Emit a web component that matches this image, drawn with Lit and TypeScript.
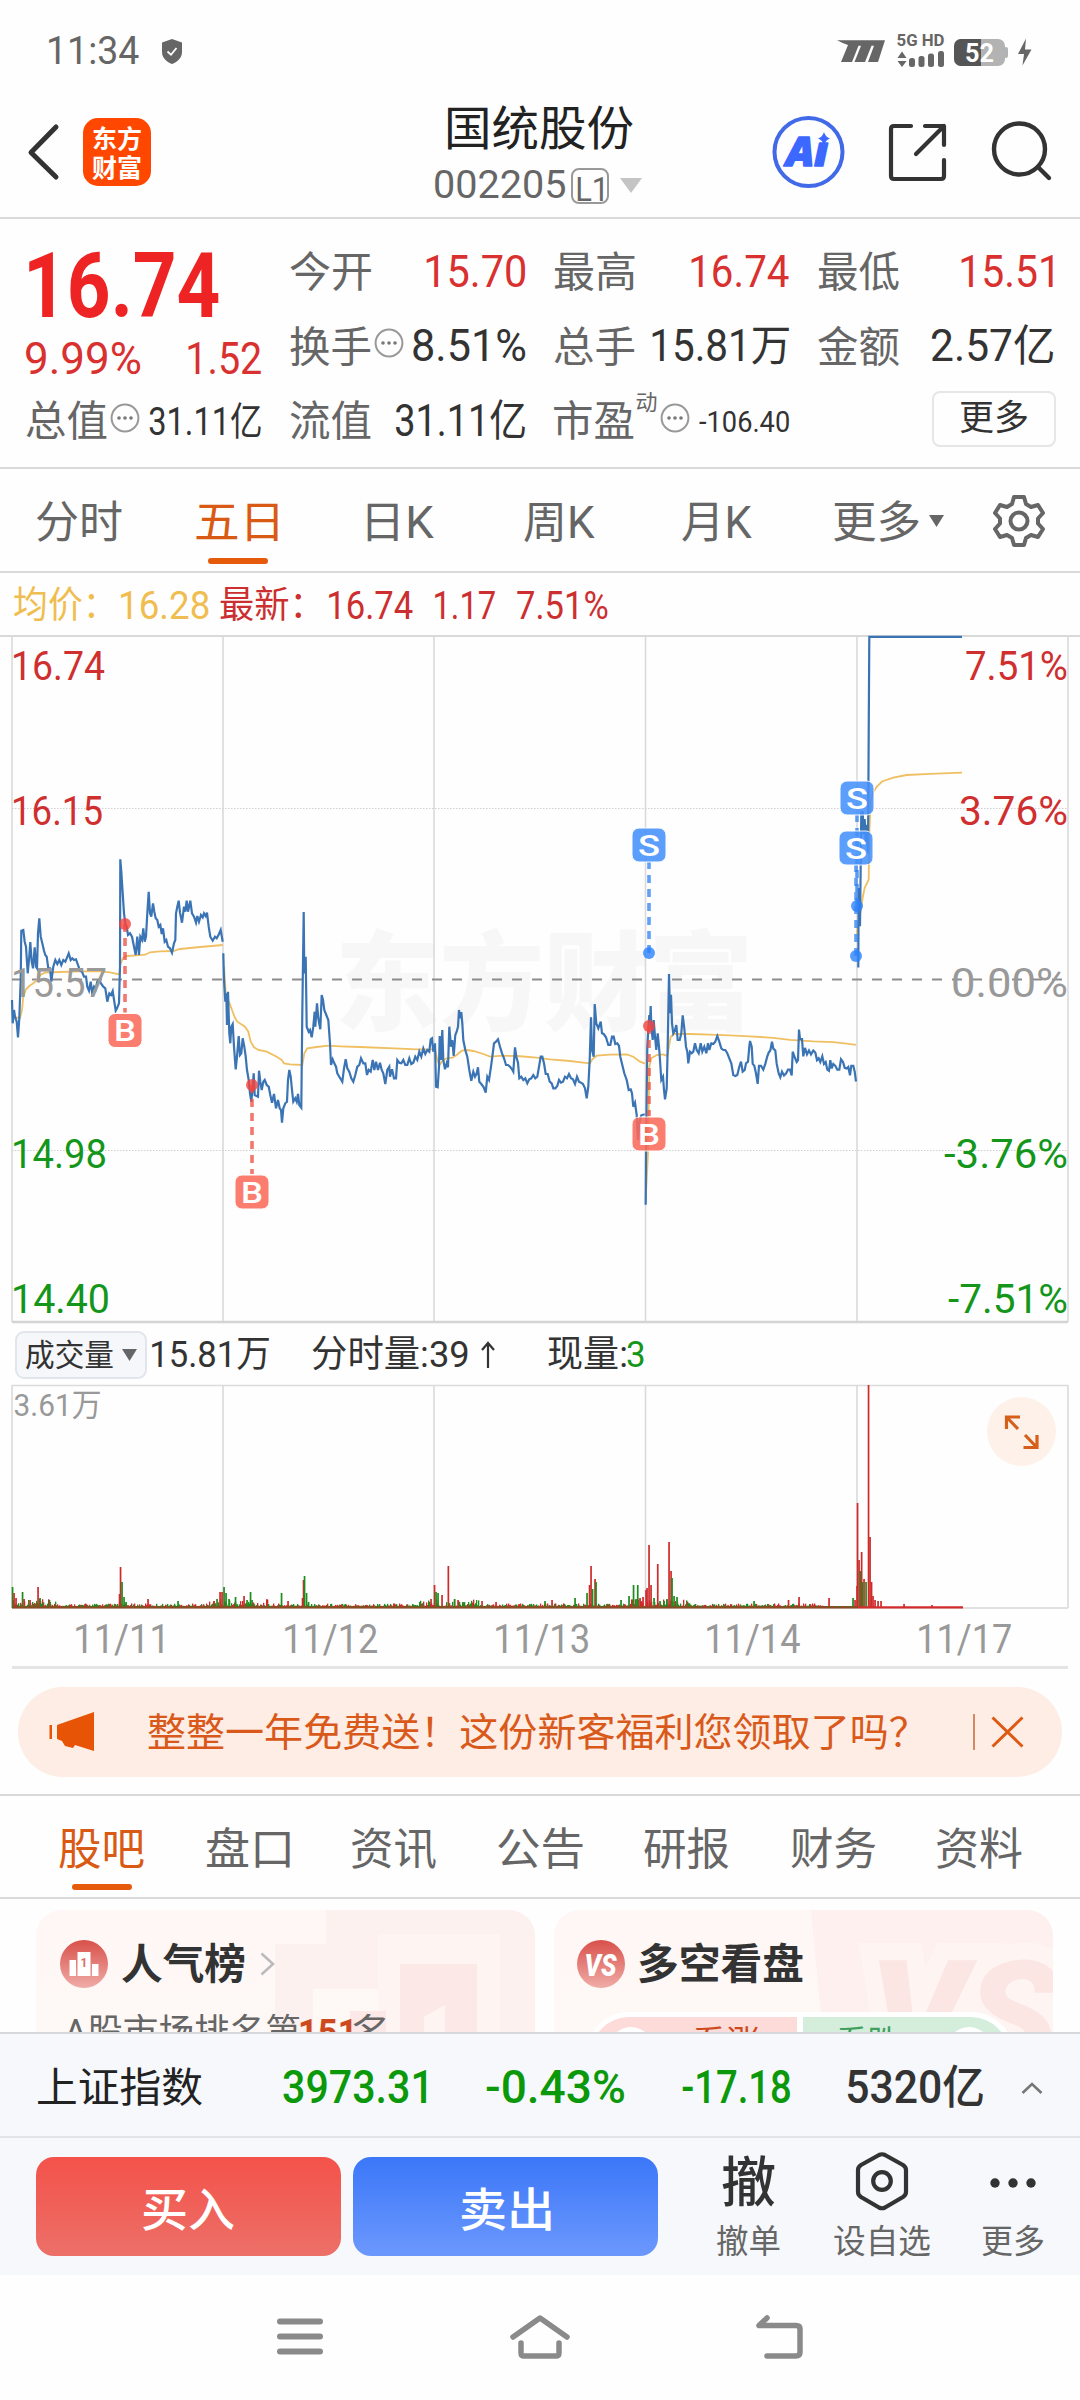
import { LitElement, html, css, svg } from "lit";
import { customElement, property } from "lit/decorators.js";
import { styleMap } from "lit/directives/style-map.js";
import { classMap } from "lit/directives/class-map.js";

const pen = document.createElement("canvas").getContext("2d")!;

/** A single line of text whose ink fills exactly `w` pixels. */
@customElement("fit-text")
class FitText extends LitElement {
  @property() text = "";
  @property({ type: Number }) w = 0;

  static styles = css`
    :host { display: block; flex: none; line-height: 1.2; white-space: pre; }
    .box { display: block; }
    .ink { display: inline-block; transform-origin: 0 50%; }
  `;

  render() {
    const cs = getComputedStyle(this);
    pen.font = `${cs.fontStyle} ${cs.fontWeight} ${cs.fontSize} ${cs.fontFamily}`;
    const m = pen.measureText(this.text);
    const k = this.w / (m.actualBoundingBoxLeft + m.actualBoundingBoxRight);
    return html`<span class="box" style=${styleMap({ width: `${this.w}px` })}
      ><span class="ink" style=${styleMap({ transform: `translateX(${m.actualBoundingBoxLeft * k}px) scaleX(${k})` })}>${this.text}</span></span>`;
  }
}

const fit = (text: string, w: number, cls = "") => html`<fit-text class=${cls} .text=${text} .w=${w}></fit-text>`;

const map = (pts: string, ox: number, oy: number, kx = 1 / 3, ky = 1 / 3) =>
  pts.trim().split(/\s+/).map((p) => {
    const [x, y] = p.split(",").map(Number);
    return `${(ox + x * kx).toFixed(1)},${(oy + y * ky).toFixed(1)}`;
  }).join(" ");
const left = (p: string) => map(p, 0, 145);
const mid = (p: string) => map(p, 390, 245);
const right = (p: string) => map(p, 640, -15, 1 / 3, 1 / 2.613);

const PRICE = [
  left("36,660 38,730 42,690 45,710 50,725 54,772 58,715 62,600 64,452 70,450 74,485 78,500 83,580 87,540 91,486 95,545 99,565 104,502 108,560 111,565 114,460 118,415 122,470 127,490 132,512 136,525 140,530 145,565 150,565 154,605 160,560 166,540 172,552 178,540 184,555 190,540 196,545 200,535 206,520 212,540 217,535 222,540 228,538 234,555 240,572 246,575 252,590 258,590 262,620 267,632 272,605 276,635 282,620 287,628 292,605 298,600 304,612 310,620 316,625 322,665 328,640 333,645 338,633 343,665 347,692 351,685 357,670 360,560 361,238 364,275 368,340 372,400 376,430 380,440 384,465 390,460 396,470 400,490 407,525 412,470 417,525 421,470 426,480 430,445 434,485 438,470 442,400 446,335 450,400 454,410 459,370 463,395 467,415 472,420 476,440 481,435 485,462 489,445 494,485 499,480 504,500 510,505 516,518 522,490 526,480 528,400 532,380 536,362 540,398 546,428 552,380 556,395 560,362 564,395 571,362 576,400 582,410 588,428 592,408 597,425 603,405 608,412 612,400 617,408 621,398 626,440 631,470 638,482 645,470 650,475 657,462 662,450 668,485"),
  left("670,520 672,600 676,665 679,640 681,735 684,635 688,760 691,790 694,740 698,732 702,800 707,868 711,830 716,768 720,825 724,820 728,775 733,800 737,830 741,870 746,900 750,940 754,965 758,920 761,880 764,945 770,948 774,950 777,872 781,905 785,930 790,905 794,900 800,915 806,920 811,945 816,968 822,942 828,985 834,960 839,985 843,990 846,1028 850,985 856,970 861,965 864,900 868,870 872,890 876,930 880,965 886,955 890,965 894,942 898,975 904,983 907,700 911,396 913,580 917,530 920,740 926,755 930,750 935,772 940,740 944,695 946,740 951,670 955,715 961,748 965,645 969,660 973,690 979,705 985,720 990,790 993,855 998,838 1003,850 1008,860 1012,880 1018,890 1027,905 1032,865 1037,838 1042,865 1048,875 1054,895 1060,905 1066,885 1072,860 1078,855 1083,835 1090,850 1096,850 1101,885 1106,870 1112,875 1118,840 1123,870 1128,845 1134,870 1140,848 1145,870 1150,880 1156,912 1162,870 1168,860") + " " +
    mid("0,590 6,568 12,595 18,595 22,540 28,548 34,550 40,540 46,555 52,555 58,535 64,552 70,548 76,530 82,540 88,515 94,530 100,505 106,522 112,510 118,515 122,478 126,475 130,515 134,495"),
  mid("135,490 138,620 143,622 147,560 149,468 153,540 157,450 160,540 165,568 170,550 174,562 178,440 183,500 187,480 191,528 196,465 200,455 204,440 207,390 210,415 214,396 217,430 220,480 226,510 232,530 238,570 244,602 250,575 255,590 260,580 264,562 268,605 274,612 281,622 287,638 292,590 297,600 303,560 309,515 312,490 318,485 324,478 330,500 336,520 342,535 348,555 354,555 360,560 366,568 370,575 375,502 379,530 384,548 388,595 394,590 400,600 406,595 412,610 418,598 424,595 430,585 436,595 442,590 448,555 452,530 457,530 462,550 467,582 473,582 479,605 485,610 490,625 496,625 502,618 507,600 513,608 519,605 525,590 531,595 537,582 543,595 549,598 555,612 561,590 567,605 573,608 579,612 585,625 590,655 595,620 599,540 603,412 606,510 611,530 614,372 619,430 625,445 632,425 636,460 641,462 648,472 655,495 661,495 666,470 671,470 676,492 682,490 687,498 691,530 697,555 703,580 710,600 716,630 722,628 726,640 730,680 735,668 740,705 744,780 748,730 754,706 764,703"),
  mid("767,974 768,820 770,640 772,500 776,430 778,405 780,425 782,378 784,440 788,480 791,420 795,470 799,510 803,460 807,500 810,540 814,600 819,590 822,630 825,658 830,625 833,500 837,282 840,400 843,344 846,430 850,460 855,450 859,435 863,480 869,480 874,460 878,406 883,445 888,500 892,515 895,550 900,515 905,520 910,515 915,490 920,510 926,520 932,490 937,515 943,500 949,520 954,490 958,510 964,490 970,492 976,485 982,468 988,485 994,505 1000,510 1006,510 1012,520 1018,535 1024,550 1030,585 1036,588 1042,585 1048,560 1053,545 1058,575 1064,570 1068,550 1074,545 1078,500") + " " +
    right("330,1100 335,1115 338,1160 343,1165 348,1185 353,1212 357,1165 363,1165 370,1175 376,1160 382,1140 386,1130 391,1125 396,1102 400,1120 406,1125 410,1160 416,1185 421,1195 426,1180 432,1190 438,1185 444,1175 450,1175 455,1190 458,1128 463,1140 470,1155 474,1150 477,1070 480,1095 486,1095 490,1140 495,1118 501,1135 507,1125 513,1135 520,1125 526,1130 531,1150 536,1145 541,1155 547,1140 552,1160 557,1155 562,1175 567,1178 571,1150 575,1172 580,1160 586,1165 592,1175 598,1175 603,1148 609,1155 614,1170 620,1172 625,1168 630,1190 634,1165 640,1165 644,1180 648,1206"),
  right("655,908 656,700 658,760 660,800 662,640 664,500 666,560 668,500 671,560 674,520 677,580 680,535 684,610 686,300 688,44 966,44"),
];

const AVERAGE = [
  left("45,712 60,714 66,690 70,650 78,628 88,618 100,610 112,600 122,584 135,578 180,576 240,574 300,574 330,577 358,583 361,555 368,535 380,528 410,526 436,524 450,517 480,514 520,513 540,507 570,504 600,501 635,498 668,495"),
  left("672,560 678,650 688,668 696,690 704,712 712,725 735,740 745,755 752,785 762,802 775,810 800,815 830,830 845,840 852,850 870,853 907,855 913,820 922,805 950,801 985,797 1020,799 1080,801 1200,806") + " " + mid("80,508 134,508"),
  mid("136,510 142,540 148,556 158,542 170,535 188,533 200,525 215,512 232,510 250,513 280,522 300,530 340,527 380,528 440,533 480,538 540,543 580,548 600,550 607,538 620,527 660,524 710,523 730,530 750,545 765,551"),
  mid("767,960 774,820 778,560 784,535 800,525 820,523 832,528 837,500 842,470 852,462 900,462 960,464 1020,466 1080,469") + " " + right("400,1092 450,1097 520,1101 580,1103 620,1107 648,1110"),
  right("650,820 655,790 662,760 668,725 674,700 686,678 688,560 692,470 700,450 710,436 726,422 760,412 800,405 870,402 966,399"),
];

interface Trade { kind: "B" | "S"; x: number; y: number; dot: number; }
const TRADES: Trade[] = [
  { kind: "B", x: 125, y: 395.5, dot: 289 },
  { kind: "B", x: 252, y: 557, dot: 450 },
  { kind: "S", x: 649, y: 210, dot: 318 },
  { kind: "B", x: 649, y: 499, dot: 391 },
  { kind: "S", x: 857, y: 163, dot: 271 },
  { kind: "S", x: 856, y: 213, dot: 321 },
];

// x, height, colour of the notable volume bars
const SPIKES: [number, number, "r" | "g"][] = [
  [12.5, 21, "g"], [14, 15, "r"], [16, 10, "r"], [22.5, 16, "g"], [24, 9, "r"], [30, 8, "r"], [38, 21, "r"], [40, 10, "g"], [50, 6, "g"],
  [119.5, 14, "r"], [120.5, 41, "r"], [122, 26, "g"], [124, 11, "g"], [126, 6, "g"], [148, 9, "r"], [178, 7, "g"], [214, 7, "r"], [217, 9, "g"],
  [220, 16, "r"], [222, 16, "r"], [224, 21, "g"], [226, 15, "g"], [229, 9, "g"], [235.5, 11, "g"], [244, 12, "r"], [247, 8, "g"], [250.5, 16, "g"], [252, 8, "g"], [281.5, 15, "g"], [288, 7, "r"],
  [302.5, 10, "r"], [303.5, 28, "r"], [304.5, 32, "g"], [306.5, 15, "g"], [308.5, 6, "g"],
  [431, 9, "r"], [434.5, 23, "r"], [436, 16, "g"], [438, 15, "g"], [442, 13, "r"], [448.3, 42, "r"], [454.5, 9, "g"], [458, 8, "r"], [463, 6, "g"], [482, 7, "r"], [496, 6, "r"], [545, 7, "g"], [552, 8, "r"],
  [575, 10, "g"], [587, 15, "g"], [589.5, 23, "r"], [591, 42, "r"], [592.5, 19, "g"], [595, 29, "r"], [596, 26, "g"],
  [621, 8, "g"], [629, 12, "g"], [633.5, 23, "g"], [636, 9, "g"], [637.7, 23, "g"], [640, 10, "r"], [643, 11, "r"], [646, 18, "r"], [647, 20, "r"], [649, 63, "r"], [651, 23, "r"], [654, 10, "g"],
  [657.7, 44, "r"], [660, 7, "g"], [664, 7, "g"], [667, 9, "g"], [669, 66, "r"], [671, 37, "r"], [672, 30, "g"], [674, 12, "g"], [677, 11, "g"],
  [754, 7, "g"], [788.5, 8, "r"], [799, 11, "r"], [829, 10, "r"], [853, 10, "g"], [855, 8, "r"], [857, 22, "r"], [857.5, 105, "r"], [859, 48, "r"], [860.2, 37, "g"], [861.6, 56, "r"], [862.6, 26, "g"],
  [864, 29, "r"], [866, 26, "g"], [868.5, 223, "r"], [870, 71, "r"], [871.5, 26, "r"], [873, 12, "r"], [875, 8, "r"], [878, 7, "r"], [881, 7, "r"], [904, 4, "r"], [932, 3, "r"],
];

const GRID_X = [12, 223, 434, 645.5, 857, 1068];
const RED = "#cf2f2f", GREEN = "#14961a", GREY = "#999";
const SCALE: [string, number, number, number, string][] = [
  ["16.74", 11, 94, 30, RED], ["16.15", 11, 92, 175, RED], ["15.57", 11, 96, 347, GREY], ["14.98", 11, 96, 518, GREEN], ["14.40", 11, 99, 663, GREEN],
];
const PERCENT: [string, number, number, string][] = [
  ["7.51%", 103, 30, RED], ["3.76%", 109, 175, RED], ["0.00%", 117, 347, GREY], ["-3.76%", 124, 518, GREEN], ["-7.51%", 120, 663, GREEN],
];

const info = html`<svg class="info" width="30" height="30" viewBox="0 0 30 30"><circle cx="15" cy="15" r="13.4" fill="none" stroke="#999" stroke-width="2"/><g fill="#777"><circle cx="9" cy="15" r="1.8"/><circle cx="15" cy="15" r="1.8"/><circle cx="21" cy="15" r="1.8"/></g></svg>`;

@customElement("app-root")
class AppRoot extends LitElement {
  static styles = css`
    :host { display: block; width: 1080px; height: 2400px; overflow: hidden; background: #fefefe; color: #333;
      font-family: Roboto, "Noto Sans CJK SC", sans-serif; }
    * { box-sizing: border-box; }
    svg { display: block; flex: none; overflow: visible; }
    .status { display: flex; align-items: center; height: 101px; padding: 1px 49px 0; color: #666; }
    .clock { font-size: 38px; margin-right: 22px; padding-top: 1px; }
    .signal { margin-left: auto; }
    .head { display: flex; align-items: center; height: 118px; border-bottom: 2px solid #d9d9d9; padding: 0 0 15px 27px; }
    .logo { display: grid; align-content: center; justify-items: center; width: 68px; height: 68px; margin-left: 24px; border-radius: 15px; background: #ff4700; color: #fff; font: 700 25px/29px "Noto Sans CJK SC", sans-serif; }
    .name { width: 210px; margin: 5px 0 0 284px; }
    .title { font-size: 47px; font-weight: 400; color: #222; margin-left: 13px; line-height: 1; }
    .code { display: flex; align-items: center; gap: 6px; height: 36px; margin-top: 16px; color: #666; font-size: 38px; }
    .level { display: grid; place-items: center; width: 38px; height: 36px; border: 2px solid #999; border-radius: 8px; font-size: 33px; }
    .drop { margin-left: 5px; }
    .tools { display: flex; align-items: center; gap: 42px; margin-left: 125.5px; }
    .quote { display: grid; grid-template-columns: 235px 235.5px 235.5px 235px; grid-template-rows: 75px 74px 75px; column-gap: 28.5px; height: 250px; padding: 16.5px 26px 0; border-bottom: 2px solid #d9d9d9; }
    .cell { display: flex; align-items: center; justify-content: space-between; font-size: 43.5px; color: #333; }
    .label { color: #666; font-size: 42px; padding-top: 1px; }
    .tagged { display: flex; align-items: center; gap: 3px; }
    .tagged .info { margin-top: -8px; }
    .up { color: #d93030; }
    .price { color: #ee2424; font-size: 90px; font-weight: 700; margin: 6px 0 0 3px; line-height: 1; }
    .change { margin-top: 25px; }
    .small { font-size: 39px; }
    .pe { font-size: 29px; }
    .sup { font-size: 22px; color: #666; margin-top: -37px; }
    .more { display: grid; place-items: center; width: 124px; height: 56px; margin-top: -7px; border: 2px solid #e6e6e6; border-radius: 8px; font-size: 35px; transform: translateX(3px); }
    .end { justify-content: flex-end; }
    .periods { display: grid; grid-template-columns: 158px 158px 168px 150px 166px 178px 81px; height: 104px; border-bottom: 2px solid #d9d9d9; font-size: 44px; color: #666; }
    .tab { display: grid; position: relative; place-items: center; padding-top: 2px; }
    .tab fit-text { padding-top: 5px; }
    .tab.on { color: #d95a14; }
    .tab.on::after { content: ""; position: absolute; left: calc(50% - 29px); bottom: 7px; width: 60px; height: 6px; border-radius: 3px; background: #e65a0c; }
    .line { display: flex; align-items: center; gap: 10px; }
    .legend { display: flex; align-items: center; height: 62px; padding: 5px 0 0 14px; font-size: 38px; color: #cc2f2f; }
    .cjk { font-size: 37px; }
    .avg { color: #efbd50; }
    .g-a { margin-left: 26px; } .g-b { margin-left: 11px; } .g-c { margin-left: 27px; } .g-d { margin-left: 22px; }
    .charttext { font-family: Roboto, "Noto Sans CJK SC", sans-serif; }
    .mark { font: 900 108px "Noto Sans CJK SC", sans-serif; }
    .badge { font: 500 29px Roboto, sans-serif; }
    .heavy { font-family: "Open Sans", sans-serif; }
    .volhead { display: flex; align-items: center; height: 60px; padding: 1px 0 0 15px; font-size: 37px; }
    .volhead fit-text { padding-top: 2px; }
    .pick { display: flex; align-items: center; gap: 9px; width: 132px; height: 48px; padding-left: 9px; margin-right: 5px; border: 2px solid #e3e5ec; border-radius: 9px; background: #f6f7fb; font-size: 31px; }
    .g-e { margin-left: 43px; } .g-f { margin-left: 13px; } .g-g { margin-left: 53px; } .g-h { margin-left: 1px; color: #14961a; }
    .volume { position: relative; }
    .expand { position: absolute; left: 987px; top: 13px; }
    .dates { display: grid; grid-template-columns: repeat(5, 211.5px); justify-items: center; align-items: center; height: 59px; margin: 0 12px; border-bottom: 3px solid #e4e4e4; width: 1056px; padding: 4px 0 0 1.5px; font-size: 40px; color: #999; }
    .banner { display: flex; align-items: center; width: 1044px; height: 90px; margin: 18px 18px 17px; padding-left: 30px; border-radius: 45px; background: #fdede4; color: #d9591b; font-size: 38.5px; }
    .pitch { margin-left: 53px; padding-top: 2px; }
    .rule { width: 2px; height: 36px; margin: 0 16px 0 66px; background: #d38a63; }
    .topics { display: grid; grid-template-columns: repeat(7, 146.4px); height: 105px; padding-left: 28px; border-top: 2px solid #d9d9d9; border-bottom: 2px solid #d9d9d9; font-size: 44px; color: #666; }
    .cards { display: flex; gap: 19px; height: 133px; padding: 11px 0 0 36px; overflow: hidden; }
    .card { position: relative; flex: none; width: 499px; height: 240px; padding: 29px 24px; border-radius: 26px; overflow: hidden; background: linear-gradient(#fef7f5, #fffaf7); }
    .art { position: absolute; right: 0; top: 0; }
    .cardhead { display: flex; position: relative; align-items: center; height: 50px; font-size: 42px; font-weight: 700; }
    .cardhead fit-text { padding-top: 3px; }
    .card2 { padding-left: 23px; }
    .ctitle { margin-left: 14px; margin-right: 15px; }
    .rank { display: flex; position: relative; margin: 23px 0 0 4px; font-size: 36px; color: #666; }
    .rank b { color: #cc4a1e; }
    .vote { display: grid; position: relative; grid-template-columns: 1fr 1fr; gap: 6px; width: 428px; height: 86px; margin: 23px 0 0 9px; border: 5px solid #fff; border-radius: 44px; overflow: hidden; background: #fff; font-size: 34px; }
    .side { display: flex; align-items: flex-start; justify-content: space-between; padding: 6px 18px; }
    .bull { background: #fddbd8; color: #cc4a1e; padding-right: 38px; }
    .bear { background: #d5eedc; color: #3f9f5c; padding-left: 34px; }
    .ball { width: 44px; height: 44px; margin-top: 4px; border-radius: 50%; background: #fff; }
    .index { display: flex; align-items: center; height: 106px; padding: 5px 0 0 38px; border-top: 2px solid #d5d8dd; border-bottom: 2px solid #e2e4e8; background: #f6f8fb; font-size: 46px; font-weight: 500; color: #333; }
    .iname { font-size: 41px; font-weight: 400; margin-right: 81px; padding-top: 2px; color: #222; }
    .down { color: #0b990b; }
    .i-a { margin-left: 59px; } .i-b { margin-left: 58px; } .i-c { margin-left: 57px; } .caret { margin-left: 38px; }
    .actions { display: flex; height: 137px; padding: 19px 0 0 36px; background: #f6f8fb; }
    .btn { display: grid; place-items: center; width: 305px; height: 99px; padding-top: 8px; margin-right: 12px; border-radius: 18px; color: #fff; font-size: 46px; font-weight: 500; }
    .buy { background: linear-gradient(#f4524a, #ec7068); }
    .sell { background: linear-gradient(#3b77f8, #6c98fd); }
    .act { display: grid; justify-items: center; grid-template-rows: 64px 58px; align-items: center; font-size: 33px; color: #666; margin-top: -8px; }
    .a1 { margin-left: 47px; } .a2 { margin-left: 54px; } .a3 { margin-left: 52px; }
    .big { font-size: 54px; font-weight: 500; color: #333; padding-top: 6px; }
    .nav { display: flex; height: 126px; align-items: center; padding: 0 0 3px 277px; }
    .home { margin-left: 187px; } .back { margin-left: 185px; }
  `;

  private tab(text: string, w: number, on = false) {
    return html`<div class=${classMap({ tab: true, on })}>${fit(text, w)}</div>`;
  }

  private cell(label: string, value: string, w: number, cls = "", tagged = false) {
    return html`<div class="cell"><div class="tagged">${fit(label, 81, "label")}${tagged ? info : ""}</div>${fit(value, w, cls)}</div>`;
  }

  private trade(t: Trade) {
    const buy = t.kind === "B";
    const c = buy ? "#fb6a5b" : "#4590fb";
    const edge = buy ? t.y - 18 : t.y + 17;
    return svg`<g>
      <line x1=${t.x} y1=${t.dot} x2=${t.x} y2=${edge} stroke=${buy ? "#ee4a40" : "#2f80f5"} stroke-width="3.6" stroke-dasharray="8 6" opacity=".75"/>
      <circle cx=${t.x} cy=${t.dot} r="6" fill=${buy ? "#f5443c" : "#2a82fb"} opacity=".8"/>
      <rect x=${t.x - 17} y=${t.y - 17} width="34" height="34" rx="7" fill=${c} opacity=".87" stroke="#fff" stroke-width="1"/>
      <text class="badge" x=${t.x} y=${t.y + 10.5} fill="#fff" text-anchor="middle" textLength="22" lengthAdjust="spacingAndGlyphs">${t.kind}</text>
    </g>`;
  }

  private priceChart() {
    return html`<svg class="charttext" width="1080" height="689" viewBox="0 0 1080 689">
      <text class="mark" x="335" y="387" fill="#f7f7f7" textLength="418" lengthAdjust="spacingAndGlyphs">东方财富</text>
      <path d="M0 1H1080" stroke="#d9d9d9" stroke-width="2"/>
      ${GRID_X.map((x) => svg`<path d="M${x} 1V687" stroke="#dadada" stroke-width="1.6"/>`)}
      <path d="M12 687H1068" stroke="#d4d4d4" stroke-width="2.4"/>
      <path d="M12 173.5H1068M12 515.5H1068" stroke="#d0d0d0" stroke-width="1" stroke-dasharray="1.5 1.5"/>
      <path d="M12 344.6H1068" stroke="#8c8c8c" stroke-width="2" stroke-dasharray="10 10"/>
      ${AVERAGE.map((p) => svg`<polyline points=${p} fill="none" stroke="#efbf62" stroke-width="1.8"/>`)}
      ${PRICE.map((p) => svg`<polyline points=${p} fill="none" stroke="#3a74b4" stroke-width="2.2"/>`)}
      ${SCALE.map(([t, x, w, y, c]) => svg`<text x=${x} y=${y + 14.5} font-size="41" fill=${c} textLength=${w} lengthAdjust="spacingAndGlyphs">${t}</text>`)}
      ${PERCENT.map(([t, w, y, c]) => svg`<text x=${1068 - w} y=${y + 14.5} font-size="41" fill=${c} textLength=${w} lengthAdjust="spacingAndGlyphs">${t}</text>`)}
      ${TRADES.map((t) => this.trade(t))}
    </svg>`;
  }

  private volumeChart() {
    const noise = [];
    for (let i = 0; i < 845; i++) {
      const r = Math.abs(Math.sin(i * 12.9898) * 43758.5453) % 1;
      const day = i % 211;
      const busy = i > 845 - 35 ? 0 : day < 45 || day > 195 ? 7 : 2.6;
      noise.push([12 + i, 1.5 + r * r * busy, i > 857 || r * 7 % 1 > 0.5 ? "r" : "g"] as const);
    }
    const ink = (c: string) => (c === "r" ? "#cf2a2a" : "#1d8c1d");
    return html`<div class="volume"><svg class="charttext" width="1080" height="226" viewBox="0 0 1080 226">
      <path d="M12 1.5H1068" stroke="#dcdcdc" stroke-width="1.6"/>
      ${GRID_X.map((x) => svg`<path d="M${x} 1V224" stroke="#dadada" stroke-width="1.6"/>`)}
      <path d="M12 224H1068" stroke="#e0e0e0" stroke-width="2"/>
      ${noise.map(([x, h, c]) => svg`<rect x=${x} y=${223.5 - h} width="1.3" height=${h} fill=${ink(c)}/>`)}
      ${SPIKES.map(([x, h, c]) => svg`<rect x=${x - 0.8} y=${224 - h} width="1.7" height=${h} fill=${ink(c)}/>`)}
      <path d="M12 223.6H858" stroke="#8a4a22" stroke-width="2"/>
      <path d="M858 223.4H963" stroke="#d22c2c" stroke-width="2.4"/>
      <text x="13.5" y="32" font-size="32" fill="#999" textLength="88" lengthAdjust="spacingAndGlyphs">3.61万</text>
    </svg>
    <svg class="expand" width="69" height="69" viewBox="0 0 69 69"><circle cx="34.5" cy="34.5" r="34.5" fill="#fef1e9"/>
      <path d="M33 20H19.5V32M20 20.500L31 32M36.500 50.500H50V38M49.500 50L38 38" fill="none" stroke="#d5601c" stroke-width="3.2"/></svg></div>`;
  }

  render() {
    return html`
      <div class="status">
        ${fit("11:34", 90, "clock")}
        <svg width="22" height="25" viewBox="0 0 22 25"><path d="M11 0 21 3.500V13C21 19 16 23 11 25 6 23 1 19 1 13V3.500Z" fill="#666"/><path d="M6.500 12.500 10 15.800 15.500 9" fill="none" stroke="#fff" stroke-width="1.800"/></svg>
        <svg class="signal" width="194" height="36" viewBox="837 33 194 36" fill="#666">
          <path d="M837 40.300H885L878 62H868L874 45.800H871.500L865 62H854.500L861 45.800H858.500L852 62H841L848 45Q843 43.500 837 40.300Z"/>
          <text x="896.500" y="46" font-size="16" font-weight="700" textLength="48" lengthAdjust="spacingAndGlyphs">5G HD</text>
          <path d="M902 51.500 906.500 58H897.500ZM897.500 61H906.500L902 67Z"/>
          <rect x="909" y="58" width="6" height="9" rx="2.500"/><rect x="918.500" y="56" width="6" height="11" rx="2.500"/><rect x="928" y="53.500" width="6" height="13.500" rx="2.500"/><rect x="938" y="51" width="6" height="16" rx="2.500"/>
          <rect x="954" y="39" width="51" height="27" rx="7" fill="#b3b3b3"/><rect x="1004" y="47" width="4" height="11" rx="2" fill="#b3b3b3"/>
          <path d="M961 39H981V66H961A7 7 0 0 1 954 59V46A7 7 0 0 1 961 39Z" fill="#555"/>
          <text x="965" y="61.500" font-size="25" font-weight="700" fill="#fff" textLength="29" lengthAdjust="spacingAndGlyphs">52</text>
          <path d="M1026 38.500 1018 54H1024L1022.500 65.500 1031.500 49.500H1025Z"/>
        </svg>
      </div>
      <div class="head">
        <svg width="32" height="56" viewBox="0 0 32 56"><path d="M29 3 4 28.500 29 53" fill="none" stroke="#333" stroke-width="5" stroke-linecap="round" stroke-linejoin="round"/></svg>
        <div class="logo"><span>东方</span><span>财富</span></div>
        <div class="name">
          ${fit("国统股份", 185, "title")}
          <div class="code">${fit("002205", 130)}<div class="level">${fit("L1", 26)}</div>
            <svg class="drop" width="22" height="15" viewBox="0 0 22 15"><path d="M0 0H22L11 15Z" fill="#c4c4c4"/></svg></div>
        </div>
        <div class="tools">
          <svg width="74" height="74" viewBox="771 114 74 74"><circle cx="808.500" cy="151" r="34" fill="none" stroke="#4169e8" stroke-width="4"/>
            <text class="heavy" x="786" y="164.500" font-size="41" font-weight="800" font-style="italic" fill="#3c68ff" stroke="#3c68ff" stroke-width="1.600" stroke-linejoin="round" textLength="42" lengthAdjust="spacingAndGlyphs">Aı</text>
            <path d="M824 131Q825.500 136 830 137.500 825.500 139 824 144 822.500 139 818 137.500 822.500 136 824 131Z" fill="#3c68ff"/></svg>
          <svg width="62" height="62" viewBox="886 120 62 62" fill="none" stroke="#333" stroke-width="4.200" stroke-linecap="round" stroke-linejoin="round"><path d="M910 125H893Q890 125 890 128V175Q890 178 893 178H940Q943 178 943 175V159M924 125H943V144M943 125 915 153"/></svg>
          <svg width="60" height="62" viewBox="990 121 60 62" fill="none" stroke="#333" stroke-width="4.400" stroke-linecap="round"><circle cx="1018.500" cy="149" r="25.500"/><path d="M1037 167 1048 178"/></svg>
        </div>
      </div>
      <div class="quote">
        ${fit("16.74", 190, "price")}
        ${this.cell("今开", "15.70", 99, "up")}
        ${this.cell("最高", "16.74", 98, "up")}
        ${this.cell("最低", "15.51", 92, "up")}
        <div class="cell change up">${fit("9.99%", 114)}${fit("1.52", 73)}</div>
        ${this.cell("换手", "8.51%", 112, "", true)}
        ${this.cell("总手", "15.81万", 137)}
        ${this.cell("金额", "2.57亿", 121)}
        ${this.cell("总值", "31.11亿", 112, "small", true)}
        ${this.cell("流值", "31.11亿", 129)}
        <div class="cell"><div class="tagged">${fit("市盈", 80, "label")}${fit("动", 20, "sup")}${info}</div>${fit("-106.40", 90, "pe")}</div>
        <div class="cell end"><div class="more">${fit("更多", 68)}</div></div>
      </div>
      <div class="periods">
        ${this.tab("分时", 86)}${this.tab("五日", 82, true)}${this.tab("日K", 67)}${this.tab("周K", 71)}${this.tab("月K", 70)}
        <div class="tab"><div class="line">${fit("更多", 85)}<svg width="15" height="12" viewBox="0 0 15 12"><path d="M0 0H15L7.500 12Z" fill="#666"/></svg></div></div>
        <div class="tab"><svg width="52" height="52" viewBox="0 0 52 52" fill="none" stroke="#666" stroke-width="4" stroke-linejoin="round"><path d="M21 2H31L33 9L38 12L45 10L50 18L45 23.500V28.500L50 34L45 42L38 40L33 43L31 50H21L19 43L14 40L7 42L2 34L7 28.500V23.500L2 18L7 10L14 12L19 9Z"/><circle cx="26" cy="26" r="8.500"/></svg></div>
      </div>
      <div class="legend">
        ${fit("均价：", 81, "cjk avg")}${fit("16.28", 88, "avg g-a")}
        ${fit("最新：", 82, "cjk g-b")}${fit("16.74", 84, "g-c")}${fit("1.17", 60, "g-d")}${fit("7.51%", 91, "g-d")}
      </div>
      ${this.priceChart()}
      <div class="volhead">
        <div class="pick">${fit("成交量", 87)}<svg width="15" height="12" viewBox="0 0 15 12"><path d="M0 0H15L7.500 12Z" fill="#666"/></svg></div>
        ${fit("15.81万", 117)}${fit("分时量:39", 156, "g-e")}
        <svg class="g-f" width="14" height="27" viewBox="0 0 14 27"><path d="M7 27V2M1 9 7 2 13 9" fill="none" stroke="#333" stroke-width="2.200"/></svg>
        ${fit("现量:", 78, "g-g")}${fit("3", 17, "g-h")}
      </div>
      ${this.volumeChart()}
      <div class="dates">${fit("11/11", 87)}${fit("11/12", 92)}${fit("11/13", 92)}${fit("11/14", 93)}${fit("11/17", 92)}</div>
      <div class="banner">
        <svg width="47" height="40" viewBox="0 0 47 40" fill="#e85405"><path d="M1.500 13H4V27H1.500ZM9 13 46 0V39L27 33 25 36 17 34 14 29 9 27Z"/></svg>
        ${fit("整整一年免费送！这份新客福利您领取了吗？", 759, "pitch")}
        <div class="rule"></div>
        <svg width="33" height="32" viewBox="0 0 33 32"><path d="M1.500 1.500 31.500 30.500M31.500 1.500 1.500 30.500" stroke="#dc5a14" stroke-width="3"/></svg>
      </div>
      <div class="topics">
        ${this.tab("股吧", 85, true)}${this.tab("盘口", 84)}${this.tab("资讯", 84)}${this.tab("公告", 85)}${this.tab("研报", 85)}${this.tab("财务", 85)}${this.tab("资料", 85)}
      </div>
      <div class="cards">
        <div class="card">
          <svg class="art" width="260" height="125" viewBox="275 1911 260 125"><path d="M326 1911H535V2036H405V1990H313V2036H275V1945H326Z" fill="#fdf1ef"/><path d="M378 1935H500V2036H378Z" fill="#fef5f3"/><path d="M400 1965H477V2036H445V2006L424 2018V2036H400ZM350 2012H386V2036H350Z" fill="#fce8e6"/></svg>
          <div class="cardhead">
            <svg width="48" height="48" viewBox="0 0 48 48"><defs><linearGradient id="ra" x2="0" y2="1"><stop stop-color="#d9504a"/><stop offset="1" stop-color="#f0aca8"/></linearGradient></defs><circle cx="24" cy="24" r="24" fill="url(#ra)"/><path d="M9.500 20H16V36H9.500ZM17.500 12H30.500V36H17.500ZM32 24H38.500V36H32Z" fill="#fff"/><text x="24" y="27" font-size="12" font-weight="700" fill="#df6b66" text-anchor="middle">1</text></svg>
            ${fit("人气榜", 123, "ctitle")}
            <svg width="15" height="24" viewBox="0 0 15 24"><path d="M1.500 1.500 13 12 1.500 22.500" fill="none" stroke="#bbb" stroke-width="2.600"/></svg>
          </div>
          <div class="rank">${fit("A股市场排名第", 236)}<b>${fit("151", 52)}</b>${fit("名", 34)}</div>
        </div>
        <div class="card card2">
          <svg class="art" width="245" height="125" viewBox="807 1911 245 125"><path d="M810 1911H1052V2036H822Z" fill="#fdf0ee"/><text class="charttext" x="868" y="2068" font-size="150" font-weight="900" font-style="italic" fill="#fbe6e4" stroke="#fef5f3" stroke-width="34" paint-order="stroke" textLength="190" lengthAdjust="spacingAndGlyphs">VS</text></svg>
          <div class="cardhead">
            <svg width="48" height="48" viewBox="0 0 48 48"><defs><linearGradient id="rb" x2="0" y2="1"><stop stop-color="#d9504a"/><stop offset="1" stop-color="#f0aca8"/></linearGradient></defs><circle cx="24" cy="24" r="24" fill="url(#rb)"/><text x="7.500" y="36" font-size="32" font-weight="900" font-style="italic" fill="#fff" textLength="32" lengthAdjust="spacingAndGlyphs">VS</text></svg>
            ${fit("多空看盘", 164, "ctitle")}
          </div>
          <div class="vote">
            <div class="side bull"><span class="ball"></span>${fit("看涨", 66)}</div>
            <div class="side bear">${fit("看跌", 61)}<span class="ball"></span></div>
          </div>
        </div>
      </div>
      <div class="index">
        ${fit("上证指数", 164, "iname")}${fit("3973.31", 143.5, "down")}${fit("-0.43%", 138, "down i-a")}${fit("-17.18", 108, "down i-b")}${fit("5320亿", 136, "i-c")}
        <svg class="caret" width="22" height="12" viewBox="0 0 22 12"><path d="M1.500 11 11 2 20.500 11" fill="none" stroke="#777" stroke-width="2.600"/></svg>
      </div>
      <div class="actions">
        <div class="btn buy">${fit("买入", 91)}</div>
        <div class="btn sell">${fit("卖出", 90)}</div>
        <div class="act a1">${fit("撤", 53, "big")}${fit("撤单", 63)}</div>
        <div class="act a2"><svg width="52" height="58" viewBox="0 0 52 58" fill="none" stroke="#333" stroke-width="4.200" stroke-linejoin="round"><path d="M23 3Q26 1.500 29 3L47 13Q50 15 50 18V40Q50 43 47 45L29 55.500Q26 57 23 55.500L5 45Q2 43 2 40V18Q2 15 5 13Z"/><circle cx="26" cy="29" r="8.800"/></svg>${fit("设自选", 96)}</div>
        <div class="act a3"><svg width="46" height="10" viewBox="0 0 46 10" fill="#333"><circle cx="5" cy="7" r="4.700"/><circle cx="23" cy="7" r="4.700"/><circle cx="41" cy="7" r="4.700"/></svg>${fit("更多", 62)}</div>
      </div>
      <div class="nav">
        <svg width="46" height="37" viewBox="0 0 46 37"><path d="M3 3.500H43M3 18.500H43M3 33.500H43" stroke="#8a8a8a" stroke-width="6" stroke-linecap="round"/></svg>
        <svg class="home" width="60" height="44" viewBox="0 0 60 44" fill="none" stroke="#8a8a8a" stroke-width="5.500" stroke-linecap="round" stroke-linejoin="round"><path d="M3 22 30 3 57 22M11 28V38Q11 41 14 41H46Q49 41 49 38V28"/></svg>
        <svg class="back" width="48" height="44" viewBox="0 0 48 44" fill="none" stroke="#8a8a8a" stroke-width="5.500" stroke-linecap="round" stroke-linejoin="round"><path d="M12 3 4 10.500H41Q45 10.500 45 14V37Q45 41 41 41H12"/></svg>
      </div>
    `;
  }
}
